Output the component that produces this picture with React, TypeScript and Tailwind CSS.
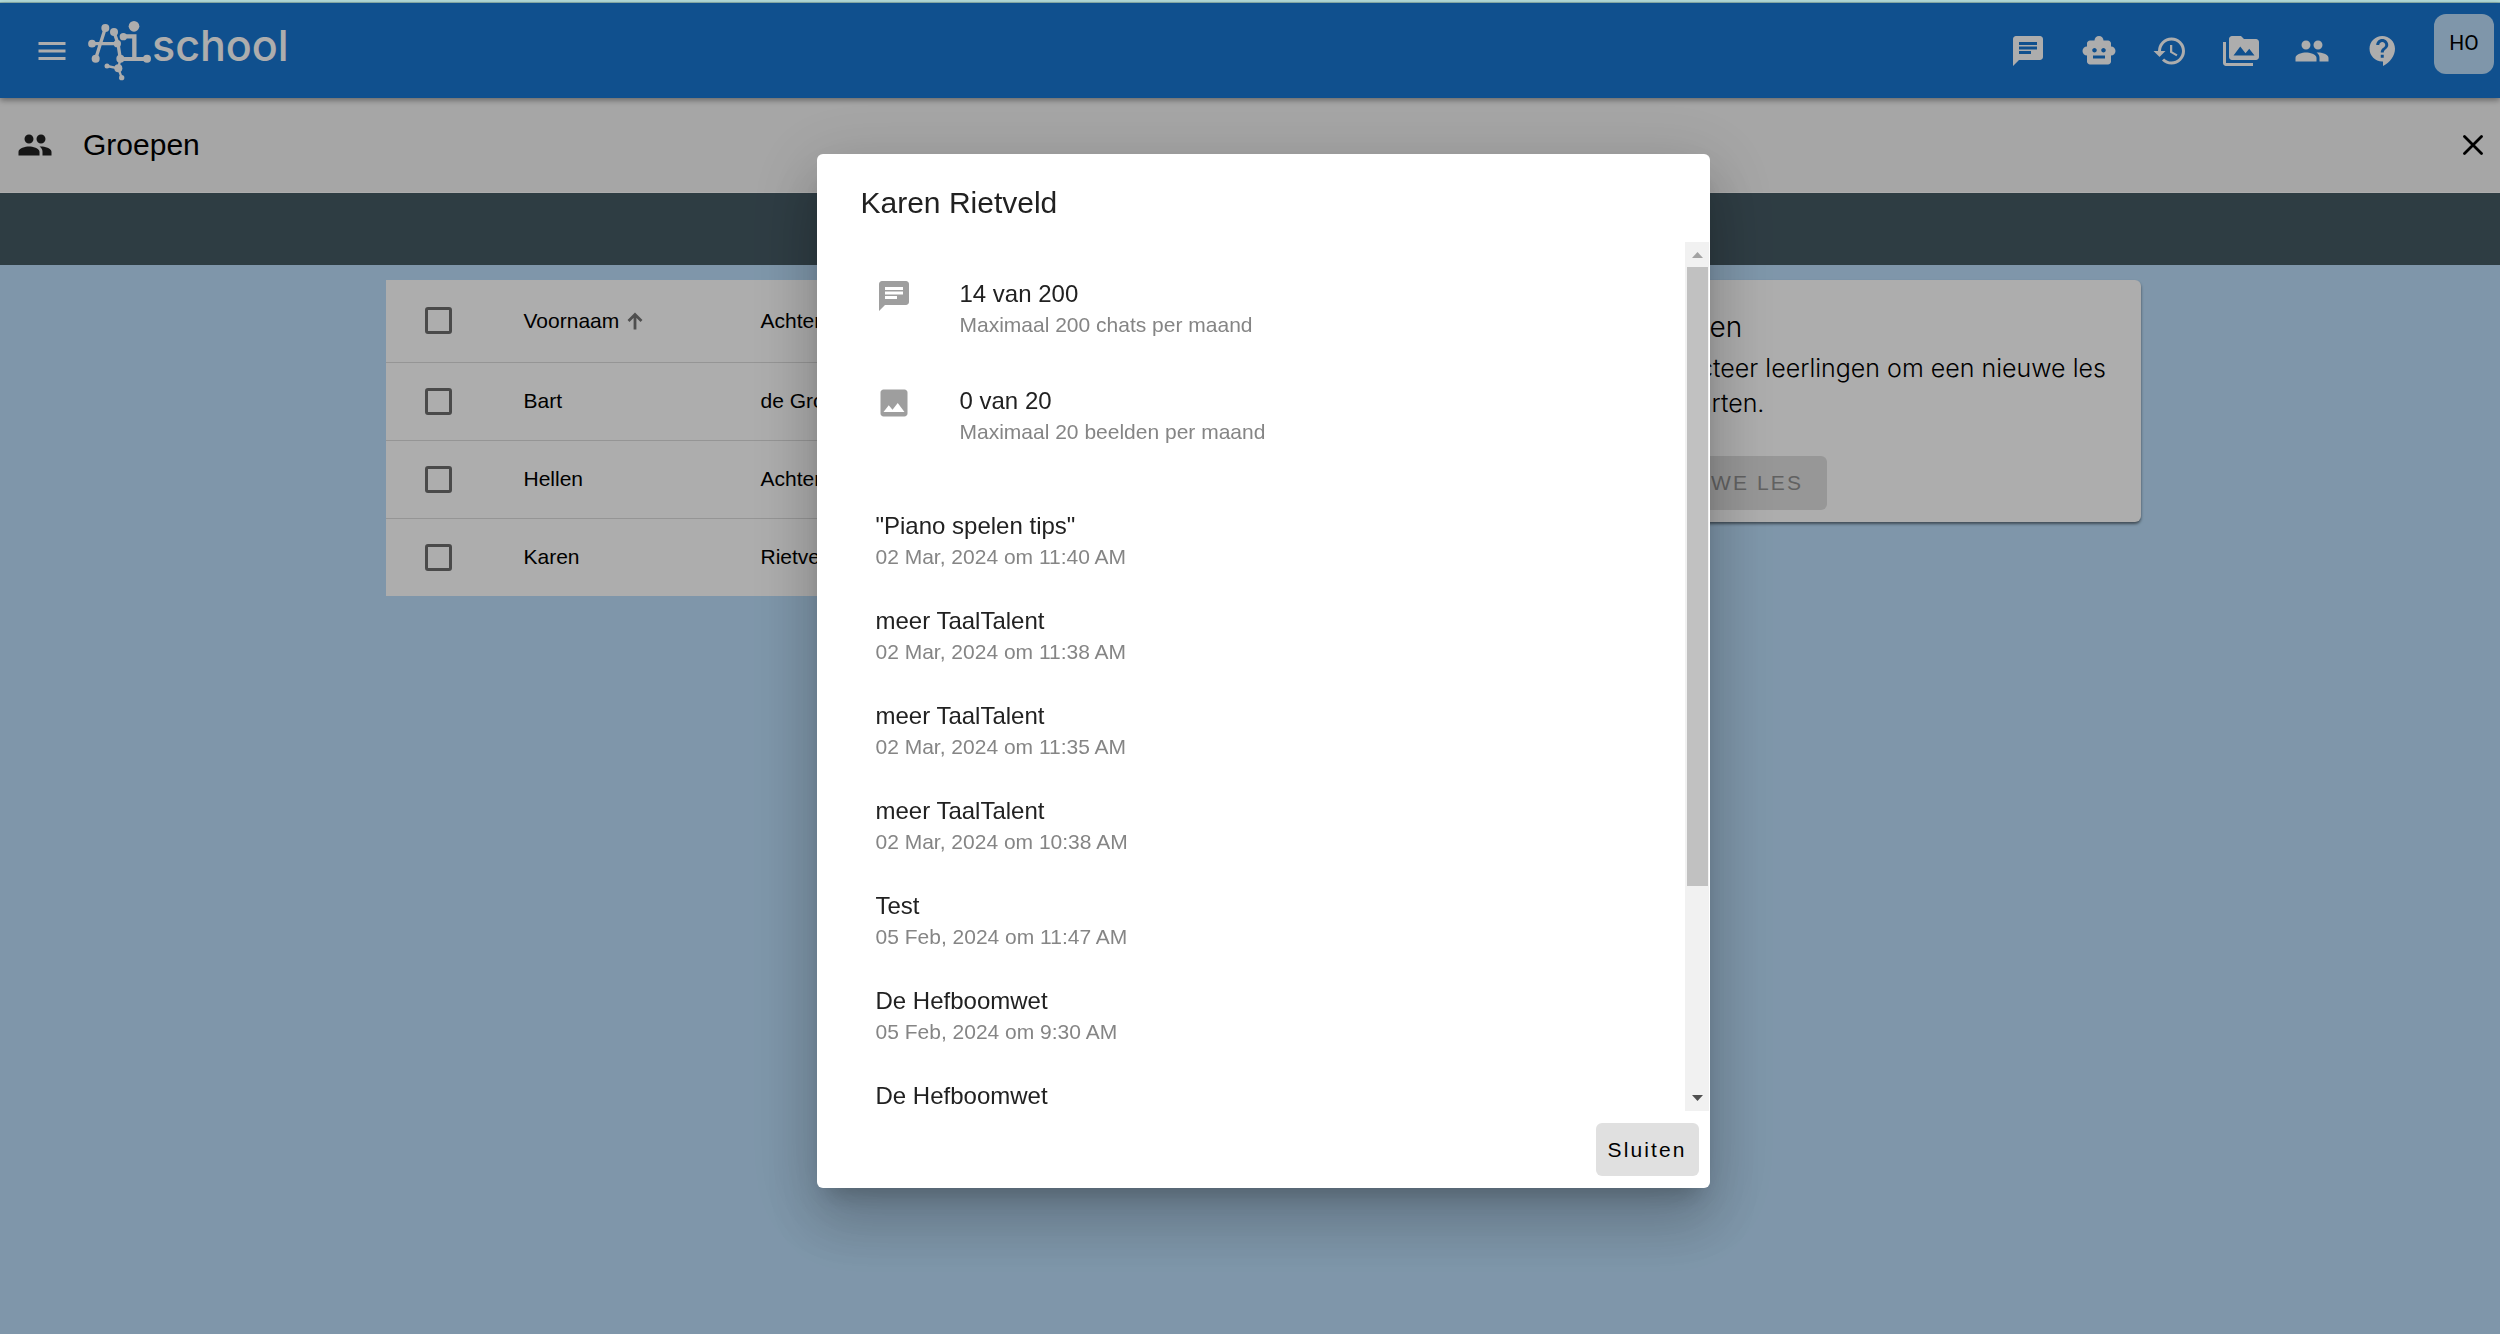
import type { ReactNode } from "react";
import {
  MdChat,
  MdContactSupport,
  MdHistory,
  MdImage,
  MdMenu,
  MdPeople,
  MdPermMedia,
  MdSmartToy,
} from "react-icons/md";

const navItems = [
  { label: "Chat", icon: MdChat },
  { label: "Robots", icon: MdSmartToy },
  { label: "Geschiedenis", icon: MdHistory },
  { label: "Media", icon: MdPermMedia },
  { label: "Groepen", icon: MdPeople },
  { label: "Help", icon: MdContactSupport },
];

const students = [
  { first: "Bart", last: "de Groot" },
  { first: "Hellen", last: "Achterberg" },
  { first: "Karen", last: "Rietveld" },
];

const chats = [
  { title: '"Piano spelen tips"', date: "02 Mar, 2024 om 11:40 AM" },
  { title: "meer TaalTalent", date: "02 Mar, 2024 om 11:38 AM" },
  { title: "meer TaalTalent", date: "02 Mar, 2024 om 11:35 AM" },
  { title: "meer TaalTalent", date: "02 Mar, 2024 om 10:38 AM" },
  { title: "Test", date: "05 Feb, 2024 om 11:47 AM" },
  { title: "De Hefboomwet", date: "05 Feb, 2024 om 9:30 AM" },
  { title: "De Hefboomwet", date: "" },
];

function Logo() {
  return (
    <a href="#" className="flex items-start text-white" aria-label="Ai.school">
      <svg viewBox="264 63 192 180" className="h-[60px] w-[64px]" fill="currentColor" stroke="none">
        <g fill="none" stroke="currentColor" strokeWidth="10">
          <path d="M276 131H354M316 84L287 176M342 96L354 131L361 176" />
          <path d="M370 109H403V176" strokeWidth="13" />
          <path d="M361 177H441" strokeWidth="12" />
          <path d="M361 176L355 205L321 198M355 205L365 233" strokeWidth="7" />
        </g>
        <circle cx="276" cy="131" r="11.5" />
        <circle cx="316" cy="84" r="12" />
        <circle cx="287" cy="176" r="12" />
        <circle cx="342" cy="96" r="12" />
        <circle cx="370" cy="110" r="11" />
        <circle cx="402" cy="79" r="16" />
        <circle cx="352" cy="131" r="11" />
        <circle cx="361" cy="176" r="12" />
        <circle cx="441" cy="176" r="12" />
        <circle cx="355" cy="205" r="12" />
        <circle cx="321" cy="198" r="7.5" />
        <circle cx="365" cy="233" r="8" />
      </svg>
      <span className="font-[Inter,sans-serif] text-[43px] leading-12 font-medium">school</span>
    </a>
  );
}

function Header() {
  return (
    <header className="relative flex h-[95px] items-center bg-[#1976d2] pr-1.5 pl-[34px] text-white shadow-[0_2px_6px_rgba(0,0,0,0.4)]">
      <button type="button" aria-label="Menu" className="mr-[18px]">
        <MdMenu size={36} />
      </button>
      <Logo />
      <nav className="ml-auto flex items-center gap-[35px]">
        {navItems.map(({ label, icon: Icon }) => (
          <button key={label} type="button" aria-label={label}>
            <Icon size={36} />
          </button>
        ))}
      </nav>
      <button
        type="button"
        className="mt-[11px] ml-[33px] h-[60px] w-[60px] self-start rounded-xl bg-[#bbdefb] font-[Roboto,sans-serif] text-[21px] text-black"
      >
        HO
      </button>
    </header>
  );
}

function TitleBar() {
  return (
    <div className="flex h-[95px] items-center border-b border-white bg-[#f5f5f5] px-[17px]">
      <MdPeople size={36} className="text-[#212121]" />
      <h1 className="ml-[30px] text-[30px] leading-9">Groepen</h1>
      <button type="button" aria-label="Sluit groepen" className="ml-auto">
        <svg viewBox="0 0 20 20" className="h-5 w-5" stroke="currentColor" strokeWidth="2.8" strokeLinecap="round">
          <path d="M1.5 1.5L18.5 18.5M18.5 1.5L1.5 18.5" />
        </svg>
      </button>
    </div>
  );
}

function Check({ label }: { label: string }) {
  return (
    <input
      type="checkbox"
      aria-label={label}
      className="block h-[27px] w-[27px] appearance-none rounded-[3px] border-3 border-[#6e6e6e] checked:bg-[#1976d2]"
    />
  );
}

function StudentTable() {
  return (
    <table className="w-full table-fixed border-collapse bg-white text-left text-[21px] leading-8">
      <thead>
        <tr className="h-[82px] border-b border-[#dcdcdc]">
          <th className="w-[114px] pl-[39px]">
            <Check label="Selecteer alle leerlingen" />
          </th>
          <th className="w-[237px] px-6 font-normal">
            <button type="button" className="flex items-center gap-2">
              Voornaam
              <svg
                viewBox="0 0 16 18"
                className="h-[18px] w-4 text-[#757575]"
                fill="none"
                stroke="currentColor"
                strokeWidth="2.8"
                aria-hidden="true"
              >
                <path d="M8 17.500V2.500M1.500 9L8 2.500L14.500 9" />
              </svg>
            </button>
          </th>
          <th className="px-6 font-normal">Achternaam</th>
        </tr>
      </thead>
      <tbody>
        {students.map((s) => (
          <tr key={s.first} className="h-[78px] border-b border-[#dcdcdc] last:border-b-0">
            <td className="pl-[39px]">
              <Check label={`Selecteer ${s.first}`} />
            </td>
            <td className="px-6">{s.first}</td>
            <td className="px-6">{s.last}</td>
          </tr>
        ))}
      </tbody>
    </table>
  );
}

function LessonCard() {
  return (
    <section className="rounded-md bg-white px-6 pt-[27px] pb-3 font-[Inter,sans-serif] font-light shadow-[0_2px_3px_rgba(0,0,0,0.5)]">
      <div className="pl-5">
        <h2 className="text-[28px] leading-10">Lessen</h2>
        <p className="mt-1 text-[25px] leading-[35px]">
          Selecteer leerlingen om een nieuwe les
          <br />
          te starten.
        </p>
      </div>
      <button
        type="button"
        disabled
        className="mt-[35px] block h-[54px] rounded-md bg-[#dfdfdf] px-6 font-['Liberation_Sans',sans-serif] text-[21px] font-normal tracking-widest text-[#909090]"
      >
        NIEUWE LES
      </button>
    </section>
  );
}

function Entry({ title, sub }: { title: string; sub: string }) {
  return (
    <div>
      <p className="text-2xl leading-9 text-[#212121]">{title}</p>
      <p className="text-[21px] leading-[26px] text-[#858585]">{sub}</p>
    </div>
  );
}

function UsageRow({ icon, title, sub }: { icon: ReactNode; title: string; sub: string }) {
  return (
    <li className="flex gap-12">
      <span className="pt-0.5 text-[#9e9e9e]">{icon}</span>
      <Entry title={title} sub={sub} />
    </li>
  );
}

function Scrollbar() {
  return (
    <div aria-hidden="true" className="mr-px flex w-6 shrink-0 flex-col items-end bg-[#f1f1f1]">
      <svg viewBox="0 0 24 25" className="h-[25px] w-6" fill="#a3a3a3">
        <path d="M7 16L12.500 10L18 16Z" />
      </svg>
      <div className="grid w-full flex-1 grid-rows-[618fr_200fr] pr-px pl-0.5">
        <div className="bg-[#c1c1c1]" />
      </div>
      <svg viewBox="0 0 24 25" className="h-[25px] w-6" fill="#505050">
        <path d="M7 9L12.500 15L18 9Z" />
      </svg>
    </div>
  );
}

function StudentDialog() {
  return (
    <div className="fixed inset-0 top-[3px] flex justify-center bg-black/32 pt-[151px] pb-[146px] pl-[26px]">
      <div
        role="dialog"
        aria-modal="true"
        aria-labelledby="dialog-title"
        className="flex w-full max-w-[893px] flex-col rounded-md bg-white shadow-[0_16px_22px_-10px_rgba(0,0,0,0.2),0_36px_57px_4px_rgba(0,0,0,0.14),0_14px_69px_12px_rgba(0,0,0,0.12)]"
      >
        <h2 id="dialog-title" className="px-11 pt-[31px] pb-[21px] text-[30px] leading-9 text-[#212121]">
          Karen Rietveld
        </h2>
        <div className="flex min-h-0 flex-1">
          <div className="min-w-0 flex-1 overflow-hidden px-[59px] pt-[34px]">
            <ul className="flex flex-col gap-[45px]">
              <UsageRow icon={<MdChat size={36} />} title="14 van 200" sub="Maximaal 200 chats per maand" />
              <UsageRow icon={<MdImage size={36} />} title="0 van 20" sub="Maximaal 20 beelden per maand" />
            </ul>
            <ul className="mt-[63px] flex flex-col gap-[33px]">
              {chats.map((c, i) => (
                <li key={i}>
                  <Entry title={c.title} sub={c.date} />
                </li>
              ))}
            </ul>
          </div>
          <Scrollbar />
        </div>
        <div className="flex justify-end py-3 pr-[11px]">
          <button type="button" className="h-[53px] rounded-md bg-[#e0e0e0] px-3 text-[21px] tracking-widest">
            Sluiten
          </button>
        </div>
      </div>
    </div>
  );
}

export default function App() {
  return (
    <div className="min-h-screen bg-[#bbdefb] font-['Liberation_Sans',Arial,sans-serif] text-black">
      <div className="h-[3px] border-b border-[#8fb5b0] bg-[#b4dcd9]" />
      <Header />
      <TitleBar />
      <div className="h-[72px] bg-[#455a64]" />
      <main className="pl-[26px]">
        <div className="mx-auto grid max-w-[1755px] grid-cols-[1fr_536px] items-start gap-4 pt-[15px]">
          <StudentTable />
          <LessonCard />
        </div>
      </main>
      <StudentDialog />
    </div>
  );
}
